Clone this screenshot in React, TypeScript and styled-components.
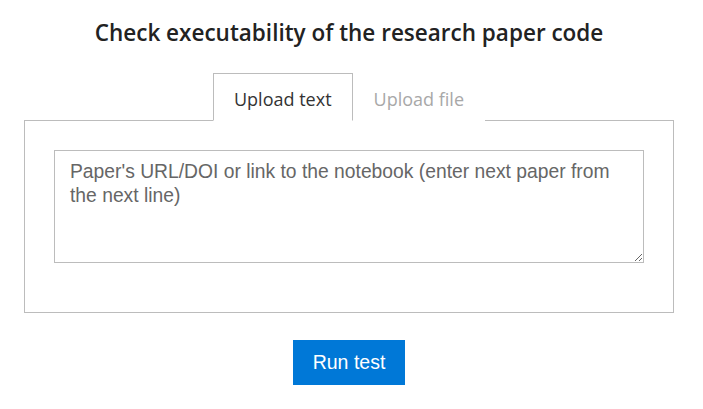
import React, { useState } from "react";
import styled, { createGlobalStyle } from "styled-components";

const GlobalStyle = createGlobalStyle`
  html, body { margin: 0; padding: 0; background: #ffffff; }
  body { font-family: "Liberation Sans", Arial, sans-serif; }
`;

const Page = styled.div`
  width: 650px;
  margin: 0 24px;
  display: flex;
  flex-direction: column;
  align-items: center;
`;

const Title = styled.h1`
  margin: 18px 0 0;
  font-family: "Open Sans", "Noto Sans", sans-serif;
  font-weight: 600;
  font-size: 22.5px;
  line-height: 30px;
  color: #222222;
  text-align: center;
  white-space: nowrap;
`;

const TabList = styled.div`
  display: flex;
  justify-content: center;
  margin-top: 25px;
  margin-bottom: -1px;
  position: relative;
  z-index: 1;
`;

const Tab = styled.button<{ $active?: boolean }>`
  height: 48px;
  padding: 3px 20px 0 20px;
  font-family: "Open Sans", "Noto Sans", sans-serif;
  font-size: 18px;
  color: ${(p) => (p.$active ? "#333333" : "#a8a8a8")};
  background: #ffffff;
  border: 1px solid ${(p) => (p.$active ? "#bcbcbc" : "transparent")};
  border-bottom: 1px solid #ffffff;
  cursor: pointer;
`;

const Panel = styled.div`
  width: 100%;
  box-sizing: border-box;
  border: 1px solid #bcbcbc;
  padding: 29px 29px 49px 29px;
`;

const Input = styled.textarea`
  display: block;
  width: 590px;
  height: 113px;
  box-sizing: border-box;
  margin: 0;
  padding: 9px 15px;
  border: 1px solid #bcbcbc;
  font-family: "Liberation Sans", Arial, sans-serif;
  font-size: 19.3px;
  line-height: 24px;
  color: #333333;
  resize: vertical;
  outline: none;
  &::placeholder { color: #666666; opacity: 1; }
`;

const RunButton = styled.button`
  margin-top: 27px;
  width: 112px;
  height: 45px;
  border: none;
  background: #0078d7;
  color: #ffffff;
  font-family: "Liberation Sans", Arial, sans-serif;
  font-size: 19.5px;
  cursor: pointer;
`;

export default function App() {
  const [tab, setTab] = useState<"text" | "file">("text");
  return (
    <>
      <GlobalStyle />
      <Page>
        <Title>Check executability of the research paper code</Title>
        <TabList>
          <Tab $active={tab === "text"} onClick={() => setTab("text")}>Upload text</Tab>
          <Tab $active={tab === "file"} onClick={() => setTab("file")}>Upload file</Tab>
        </TabList>
        <Panel>
          <Input placeholder="Paper's URL/DOI or link to the notebook (enter next paper from the next line)" />
        </Panel>
        <RunButton>Run test</RunButton>
      </Page>
    </>
  );
}
